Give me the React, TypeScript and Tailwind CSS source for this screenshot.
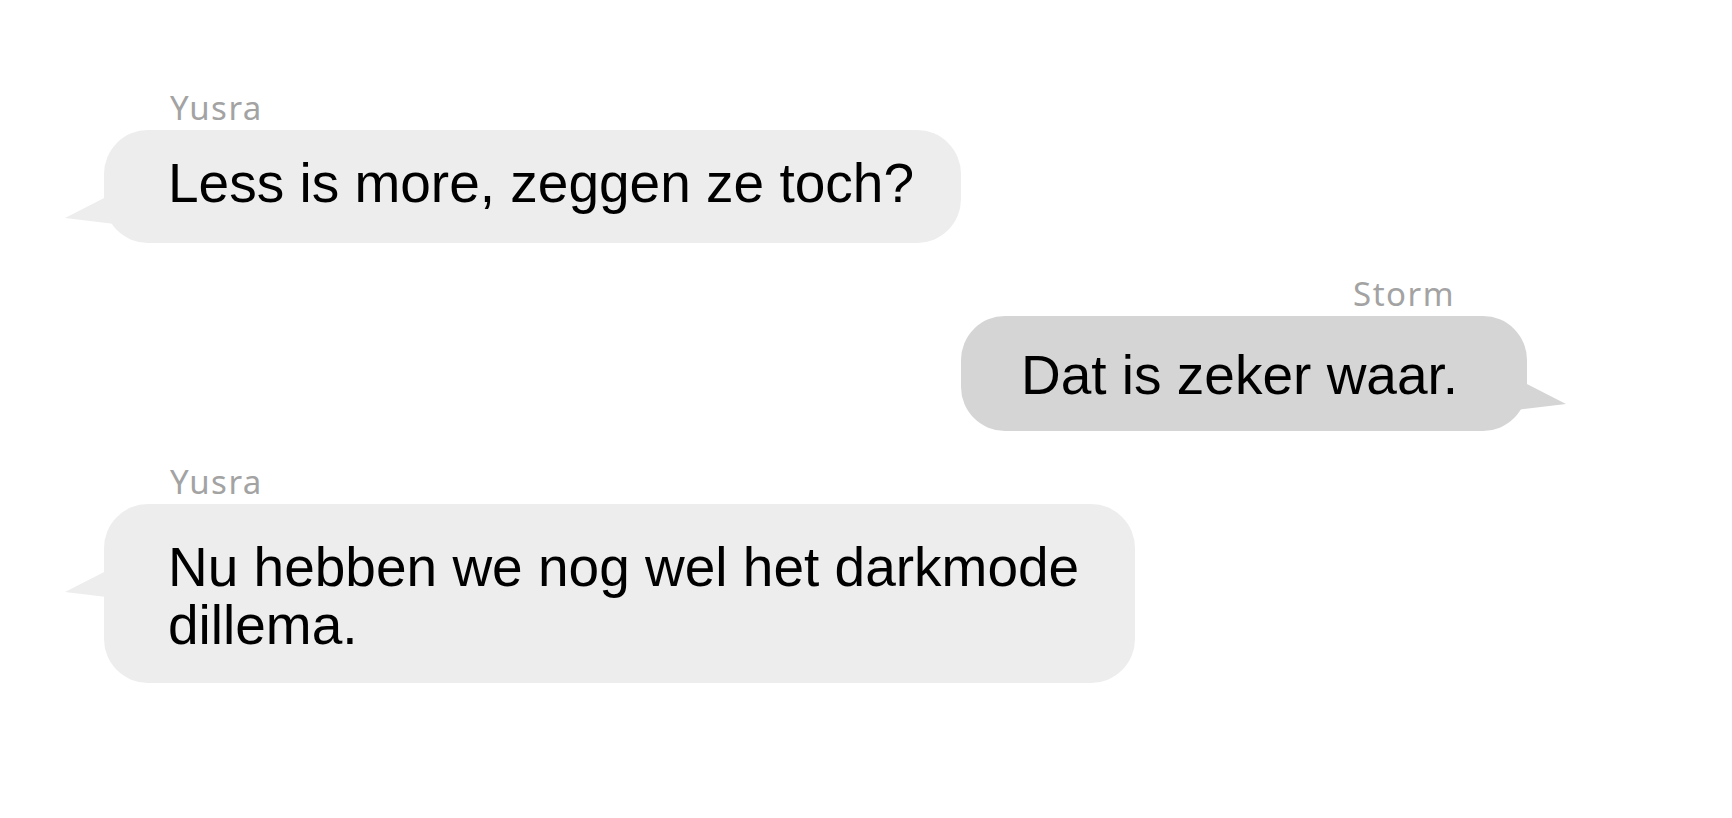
import React from "react";

type Msg = {
  name: string;
  text: string;
  mine: boolean;
  bubble: string;
};

const MESSAGES: Msg[] = [
  {
    name: "Yusra",
    text: "Less is more, zeggen ze toch?",
    mine: false,
    bubble: "w-[857px] pl-[64px] pr-[40px] pt-[24px] pb-[31px] bg-[#ededed]",
  },
  {
    name: "Storm",
    text: "Dat is zeker waar.",
    mine: true,
    bubble: "w-[566px] pl-[60px] pr-[40px] pt-[30px] pb-[27px] bg-[#d5d5d5]",
  },
  {
    name: "Yusra",
    text: "Nu hebben we nog wel het darkmode dillema.",
    mine: false,
    bubble: "w-[1031px] pl-[64px] pr-[36px] pt-[34px] pb-[29px] bg-[#ededed]",
  },
];

// little speech tail, drawn for the left side and mirrored for the right one
function Tail({ mine }: { mine: boolean }) {
  return (
    <svg
      width="52"
      height="32"
      viewBox="0 0 52 32"
      className={
        mine
          ? "absolute top-[64px] right-[-39px] -scale-x-100"
          : "absolute top-[64px] left-[-39px]"
      }
    >
      <polygon points="0,24 45,1 52,1 52,30.3" className={mine ? "fill-[#d5d5d5]" : "fill-[#ededed]"} />
    </svg>
  );
}

function Message({ msg }: { msg: Msg }) {
  return (
    <div className={msg.mine ? "flex flex-col items-end self-end" : "flex flex-col items-start"}>
      <div
        className={
          msg.mine
            ? "pr-[72px] mb-[6px] text-[33px] leading-[32px] tracking-[1.5px] text-[#a3a3a3] font-['Noto_Sans',sans-serif]"
            : "pl-[66px] mb-[6px] text-[33px] leading-[32px] tracking-[1.5px] text-[#a3a3a3] font-['Noto_Sans',sans-serif]"
        }
      >
        {msg.name}
      </div>
      <div className={`relative rounded-[44px] ${msg.bubble}`}>
        <Tail mine={msg.mine} />
        <p className="relative text-[55px] leading-[58px] text-black font-['Liberation_Sans',Arial,sans-serif]">
          {msg.text}
        </p>
      </div>
    </div>
  );
}

export default function App() {
  return (
    <div className="min-h-screen w-full bg-white pt-[92px] pl-[104px] pr-[205px] flex flex-col gap-[35px]">
      {MESSAGES.map((m, i) => (
        <Message key={i} msg={m} />
      ))}
    </div>
  );
}
